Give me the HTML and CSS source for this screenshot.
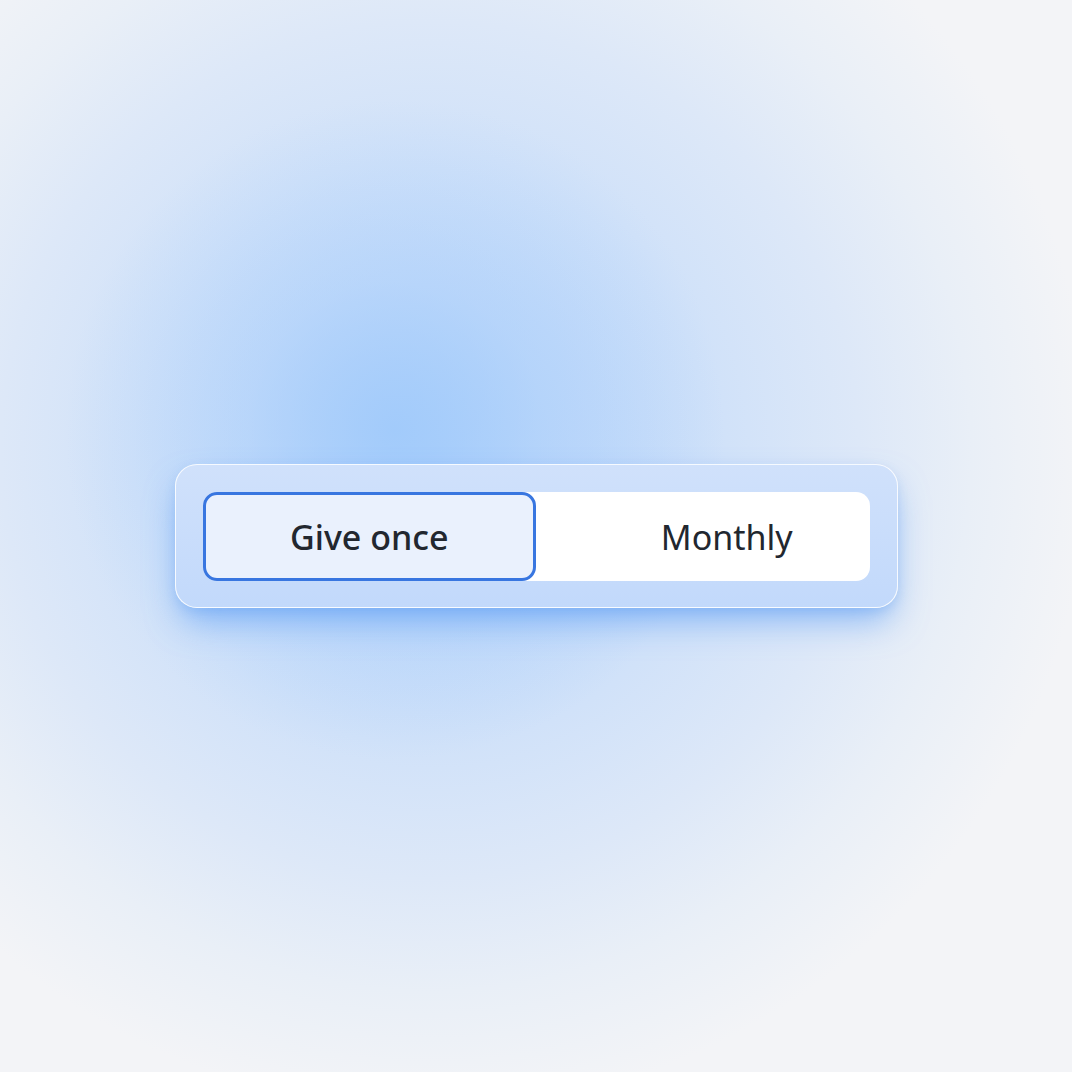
FILE: index.html
```html
<!DOCTYPE html>
<html lang="en">
<head>
<meta charset="utf-8">
<title>Give once / Monthly</title>
<link rel="stylesheet" href="styles.css">
</head>
<body>
<main class="stage">
  <div class="toggle" role="tablist">
    <div class="track">
      <button class="seg seg-active" role="tab" aria-selected="true">Give once</button>
      <button class="seg seg-idle" role="tab" aria-selected="false">Monthly</button>
    </div>
  </div>
</main>
</body>
</html>
```
FILE: styles.css
```css
html, body {
  margin: 0;
  padding: 0;
  width: 100%;
  height: 100%;
}
body {
  font-family: "Noto Sans", "Open Sans", "Liberation Sans", sans-serif;
  background: #f3f4f7;
}
.stage {
  width: 1072px;
  height: 1072px;
  display: flex;
  align-items: center;
  justify-content: center;
  background:
    radial-gradient(circle 330px at 395px 430px,
      rgba(160,202,251,0.9) 0%,
      rgba(170,207,251,0.45) 45%,
      rgba(180,212,251,0) 100%),
    radial-gradient(circle 660px at 430px 450px,
      #b2d2fb 0%,
      #c2dafa 25%,
      #d1e2f9 45%,
      #dde8f8 65%,
      #e9eff7 82%,
      #f3f4f7 100%);
}
.toggle {
  width: 723px;
  height: 144px;
  box-sizing: border-box;
  padding: 27px 27px 26px;
  border-radius: 22px;
  border: 1.5px solid rgba(255,255,255,0.85);
  background: linear-gradient(180deg, #d0e1fb 0%, #c2d9fb 100%);
  box-shadow: 0 18px 34px -6px rgba(80,150,245,0.6), 0 4px 10px rgba(120,170,240,0.25);
  display: flex;
}
.track {
  flex: 1;
  display: grid;
  grid-template-columns: 1fr 1fr;
  background: #ffffff;
  border-radius: 14px;
}
.seg {
  min-width: 0;
  border: 0;
  background: transparent;
  font-family: inherit;
  font-size: 34px;
  color: #22272f;
  display: flex;
  align-items: center;
  justify-content: center;
  cursor: pointer;
  padding: 0;
}
.seg-active {
  background: #eaf1fd;
  border: 3px solid #3876e0;
  border-radius: 14px;
  font-weight: 500;
}
.seg-idle {
  font-weight: 400;
  padding-left: 48px;
}
```
